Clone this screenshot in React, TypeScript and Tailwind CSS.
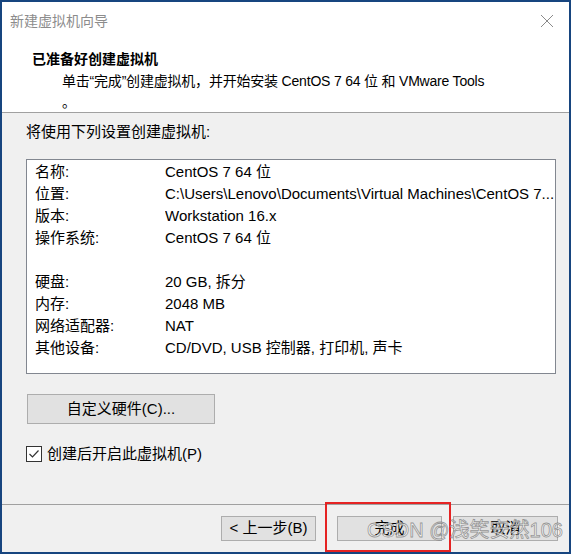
import React from "react";

// VMware "new virtual machine" wizard, final summary page.
const FONT = "font-['Liberation_Sans','Noto_Sans_CJK_SC',sans-serif]";

type Row = { label: string; value: string } | null;

const rows: Row[] = [
  { label: "名称:", value: "CentOS 7 64 位" },
  { label: "位置:", value: "C:\\Users\\Lenovo\\Documents\\Virtual Machines\\CentOS 7..." },
  { label: "版本:", value: "Workstation 16.x" },
  { label: "操作系统:", value: "CentOS 7 64 位" },
  null,
  { label: "硬盘:", value: "20 GB, 拆分" },
  { label: "内存:", value: "2048 MB" },
  { label: "网络适配器:", value: "NAT" },
  { label: "其他设备:", value: "CD/DVD, USB 控制器, 打印机, 声卡" },
];

function CloseIcon() {
  return (
    <svg width="14" height="14" viewBox="0 0 14 14" className="text-[#8a8a8a]">
      <path d="M1 1 L13 13 M13 1 L1 13" stroke="currentColor" strokeWidth="1" fill="none" />
    </svg>
  );
}

function CheckBox() {
  return (
    <svg width="16" height="16" viewBox="0 0 16 16" className="shrink-0">
      <rect x="0.5" y="0.5" width="15" height="15" fill="#fff" stroke="#333" />
      <path d="M3.5 8 L6.5 11 L12.5 4.5" stroke="#333" strokeWidth="1.2" fill="none" />
    </svg>
  );
}

function WizardButton({ children, className = "" }: { children: React.ReactNode; className?: string }) {
  return (
    <div
      className={`flex items-center justify-center border border-[#adadad] bg-[#e1e1e1] text-[15px] text-black ${className}`}
    >
      {children}
    </div>
  );
}

export default function App() {
  return (
    <div className={`relative flex h-[554px] w-[571px] flex-col border-2 border-[#17457f] bg-[#f0f0f0] ${FONT}`}>
      {/* header */}
      <div className="flex h-[111px] flex-col border-b border-[#a0a0a0] bg-white">
        <div className="flex h-[38px] items-center justify-between pl-[8px] pr-[15px]">
          <span className="text-[14px] text-[#8c8c8c]">新建虚拟机向导</span>
          <CloseIcon />
        </div>
        <div className="mt-[8px] flex h-[22px] items-center pl-[30px] text-[14px] font-bold text-black">
          已准备好创建虚拟机
        </div>
        <div className="flex h-[22px] items-center pl-[60px] text-[14px] tracking-[-0.2px] text-black">
          单击“完成”创建虚拟机，并开始安装 CentOS 7 64 位 和 VMware Tools
        </div>
        <div className="flex h-[20px] items-center pl-[60px] text-[14px] text-black">。</div>
      </div>

      {/* body */}
      <div className="flex flex-1 flex-col px-[24px] pt-[9px] text-[15px] text-black">
        <div className="flex h-[20px] items-center">将使用下列设置创建虚拟机:</div>
        <div className="mt-[17px] h-[215px] w-[530px] border border-[#828790] bg-white pt-[1px]">
          {rows.map((r, i) =>
            r ? (
              <div key={i} className="flex h-[22px] items-center">
                <span className="w-[138px] shrink-0 pl-[8px]">{r.label}</span>
                <span className="min-w-0 flex-1 overflow-hidden whitespace-nowrap">{r.value}</span>
              </div>
            ) : (
              <div key={i} className="h-[22px]" />
            )
          )}
        </div>
        <WizardButton className="ml-px mt-[20px] h-[30px] w-[188px]">自定义硬件(C)...</WizardButton>
        <div className="mt-[22px] flex h-[16px] items-center gap-[5px]">
          <CheckBox />
          <span>创建后开启此虚拟机(P)</span>
        </div>
      </div>

      {/* footer */}
      <div className="flex h-[48px] items-start justify-end border-t border-[#a0a0a0] pr-[11px] pt-[11px]">
        <WizardButton className="h-[25px] w-[95px]">&lt; 上一步(B)</WizardButton>
        <WizardButton className="ml-[21px] h-[25px] w-[105px]">完成</WizardButton>
        <WizardButton className="ml-[11px] h-[25px] w-[105px]">取消</WizardButton>
      </div>

      {/* screenshot annotation + watermark */}
      <div className="pointer-events-none absolute left-[323px] top-[500px] h-[50px] w-[126px] border-2 border-[#e52323]" />
      <div className="pointer-events-none absolute left-[365px] top-[516px] text-[20px] leading-[24px] text-[rgba(255,255,255,0.75)] [-webkit-text-stroke:0.8px_rgba(110,110,110,0.7)]">
        CSDN @浅笑安然106
      </div>
    </div>
  );
}
